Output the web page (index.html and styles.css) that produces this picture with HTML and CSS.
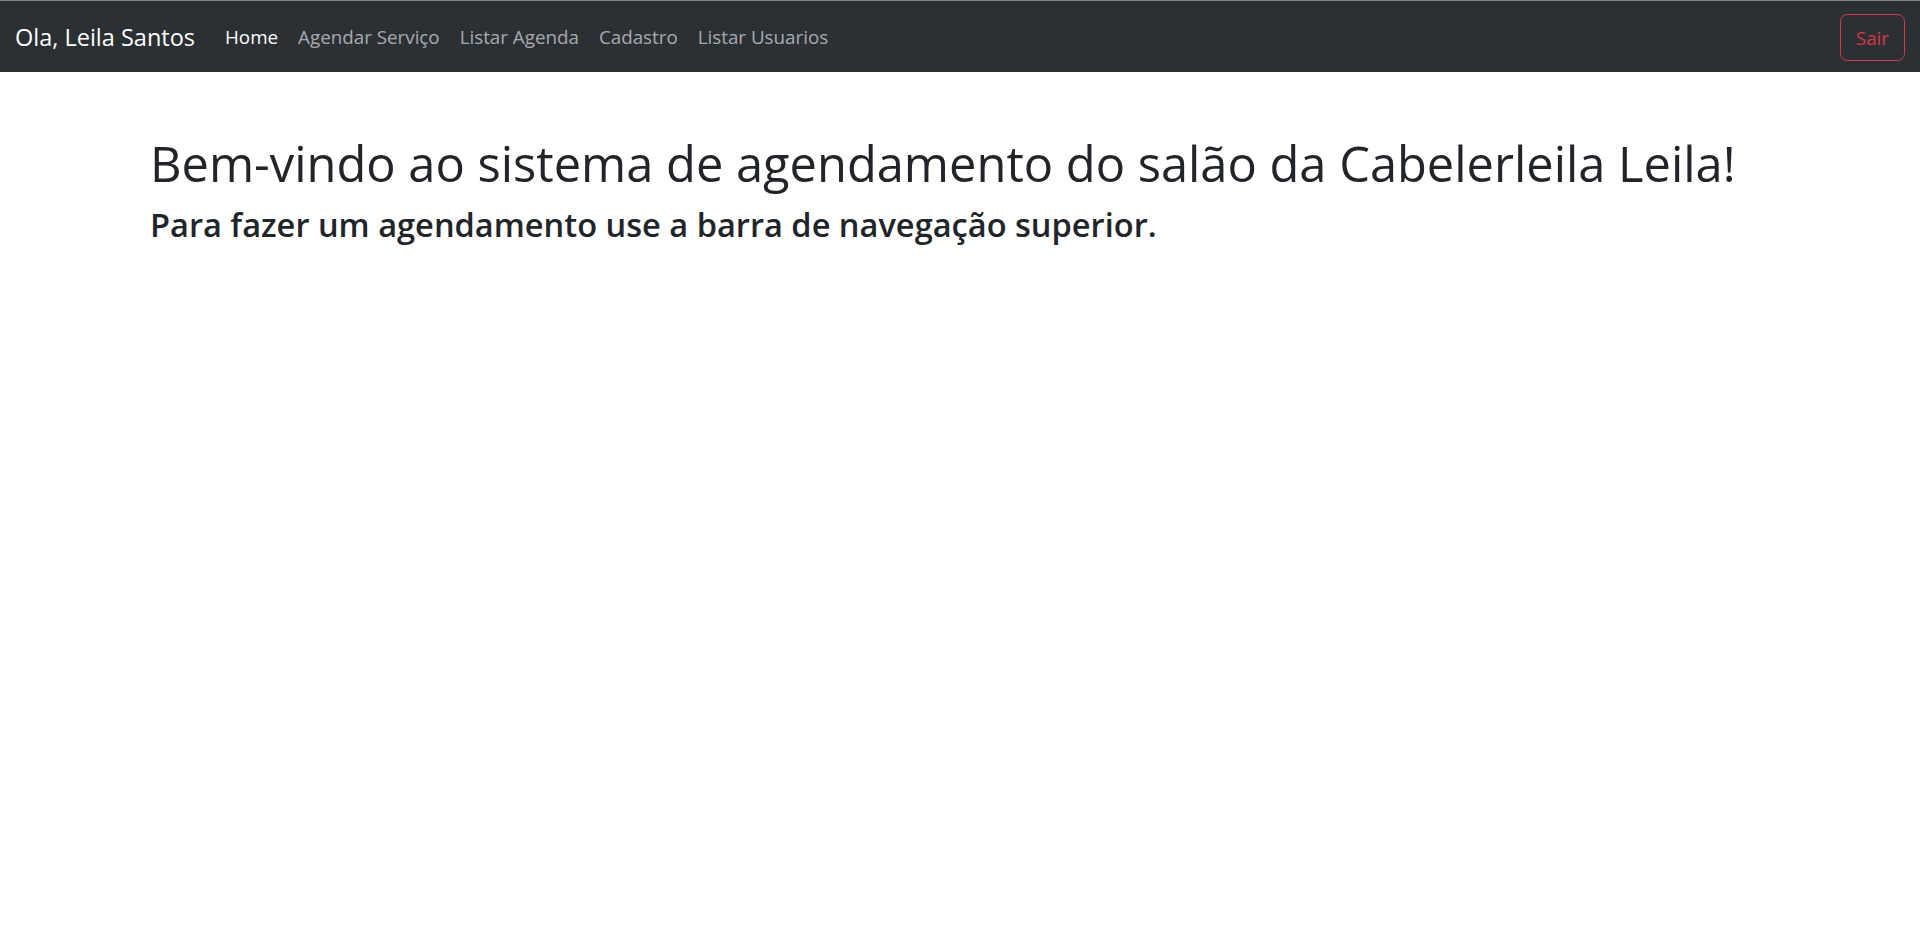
FILE: index.html
```html
<!DOCTYPE html>
<html lang="pt-BR">
<head>
<meta charset="utf-8">
<title>Cabelerleila Leila</title>
<link rel="stylesheet" href="styles.css">
</head>
<body>
<nav class="navbar">
  <a class="brand" href="#">Ola, Leila Santos</a>
  <ul class="nav">
    <li><a class="nav-link active" href="#">Home</a></li>
    <li><a class="nav-link" href="#">Agendar Serviço</a></li>
    <li><a class="nav-link" href="#">Listar Agenda</a></li>
    <li><a class="nav-link" href="#">Cadastro</a></li>
    <li><a class="nav-link" href="#">Listar Usuarios</a></li>
  </ul>
  <button class="btn-sair" type="button">Sair</button>
</nav>
<main class="container">
  <h1 class="title">Bem-vindo ao sistema de agendamento do salão da Cabelerleila Leila!</h1>
  <h3 class="subtitle">Para fazer um agendamento use a barra de navegação superior.</h3>
</main>
</body>
</html>
```
FILE: styles.css
```css
* { box-sizing: border-box; }
html, body { margin: 0; padding: 0; background: #fff; }
body {
  font-family: "Open Sans", "Noto Sans", sans-serif;
  color: #212529;
}
.navbar {
  display: flex;
  align-items: center;
  height: 72px;
  padding: 2px 15px 0;
  background: #2b3035;
  border-top: 1px solid #7d8186;
}
.brand {
  font-size: 23.5px;
  color: #fff;
  text-decoration: none;
  margin-right: 20px;
  line-height: 1;
}
.nav {
  display: flex;
  list-style: none;
  margin: 0;
  padding: 0;
}
.nav-link {
  display: block;
  padding: 0 10px;
  font-size: 18.8px;
  color: rgba(255, 255, 255, 0.6);
  text-decoration: none;
  line-height: 1;
}
.nav-link.active { color: #fff; }
.btn-sair {
  margin-left: auto;
  height: 47px;
  padding: 0 15px;
  border: 1.25px solid #dc3545;
  border-radius: 7.5px;
  background: transparent;
  color: #dc3545;
  font-family: inherit;
  font-size: 18.8px;
}
.container {
  max-width: 1650px;
  margin: 0 auto;
  padding: 0 15px;
}
.title {
  margin: 61px 0 11px;
  font-size: 48.8px;
  font-weight: 400;
  line-height: 60px;
}
.subtitle {
  margin: 0;
  font-size: 32.6px;
  font-weight: 600;
  line-height: 42px;
}
```
